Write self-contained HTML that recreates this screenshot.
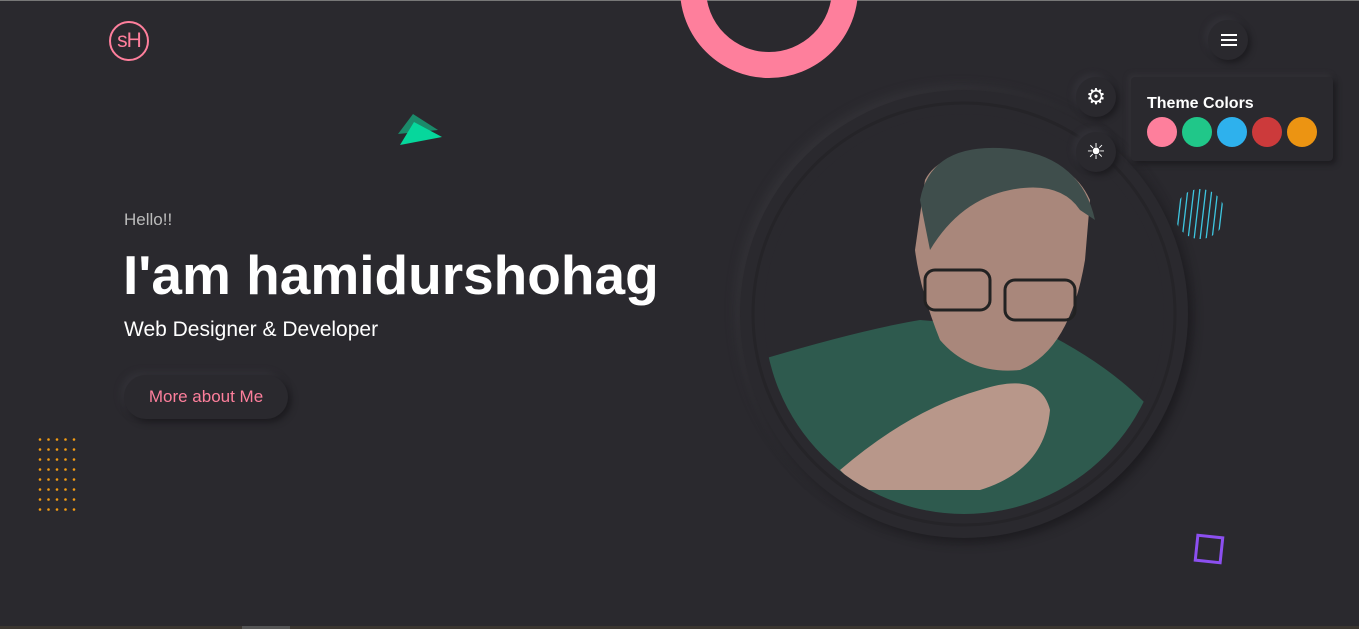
<!DOCTYPE html>
<html><head><style>
*{margin:0;padding:0;box-sizing:border-box}
body{width:1359px;height:629px;background:#2a292e;overflow:hidden;position:relative;font-family:"Liberation Sans",sans-serif;color:#fff}
.a{position:absolute}
.btn{border-radius:50%;background:#2a292e;box-shadow:3px 3px 6px #1d1c20,-3px -3px 6px #333238}
</style></head><body>
<div class="a" style="left:0;top:0;width:1359px;height:1px;background:#777"></div>
<div class="a" style="left:0;top:626px;width:1359px;height:3px;background:#3b3630"></div>
<div class="a" style="left:242px;top:626px;width:48px;height:3px;background:#555"></div>
<div class="a" style="left:109px;top:21px;width:40px;height:40px;border:2px solid #fe7f9c;border-radius:50%;color:#fe7f9c;font-size:21px;text-align:center;line-height:36px;letter-spacing:-1px">sH</div>
<div class="a" style="left:680px;top:-100px;width:178px;height:178px;border:26px solid #fe7f9c;border-radius:50%"></div>
<svg class="a" style="left:398px;top:112px" width="46" height="36"><polygon points="0,22 15,2 40,18" fill="#1b8a6a"/><polygon points="2,33 16,10 44,25" fill="#06d79c"/></svg>
<div class="a" style="left:124px;top:210px;font-size:17px;color:#bbb">Hello!!</div>
<div class="a" style="left:123px;top:243px;font-size:55px;font-weight:bold;letter-spacing:0px">I'am hamidurshohag</div>
<div class="a" style="left:124px;top:318px;font-size:21px">Web Designer &amp; Developer</div>
<div class="a" style="left:124px;top:375px;width:164px;height:44px;border-radius:22px;background:#2a292e;box-shadow:3px 3px 7px #1b1a1e,-3px -3px 7px #343339;color:#fe7f9c;font-size:17px;text-align:center;line-height:44px">More about Me</div>
<svg class="a" style="left:38px;top:437px" width="40" height="75"><defs><pattern id="d" width="8.5" height="10" patternUnits="userSpaceOnUse"><circle cx="2" cy="2.5" r="1.3" fill="#f39c12"/></pattern></defs><rect width="40" height="75" fill="url(#d)"/></svg>
<div class="a" style="left:740px;top:90px;width:448px;height:448px;border-radius:50%;box-shadow:4px 4px 10px #1c1b1f,-4px -4px 10px #36353a"></div>
<svg class="a" style="left:740px;top:90px" width="450" height="450">
<defs><clipPath id="c"><circle cx="224" cy="224" r="200"/></clipPath></defs>
<circle cx="224" cy="224" r="211" fill="none" stroke="#252428" stroke-width="3"/>
<g clip-path="url(#c)">
<rect x="0" y="0" width="450" height="450" fill="#2a292e"/>
<path d="M20 270 Q120 240 180 230 L300 240 Q380 280 420 330 L420 450 L0 450 Z" fill="#2e5a4e"/>
<path d="M100 380 Q170 320 240 300 Q300 280 310 320 Q305 380 240 400 L120 400 Z" fill="#b8978a"/>
</g>
<path d="M185 90 Q200 60 260 62 Q330 65 350 110 L345 170 Q330 260 280 280 Q230 285 200 250 Q180 200 175 160 Z" fill="#a9877b"/>
<path d="M180 110 Q190 55 260 58 Q340 62 355 130 L340 120 Q320 90 270 100 Q220 110 190 160 Z" fill="#3f4e4c"/>
<rect x="185" y="180" width="65" height="40" rx="10" fill="none" stroke="#222" stroke-width="3"/><rect x="265" y="190" width="70" height="40" rx="10" fill="none" stroke="#222" stroke-width="3"/>
</svg>
<div class="a btn" style="left:1208px;top:20px;width:40px;height:40px"></div>
<div class="a" style="left:1221px;top:34px;width:16px;height:2px;background:#fff;box-shadow:0 5px 0 #fff,0 10px 0 #fff"></div>
<div class="a btn" style="left:1076px;top:77px;width:40px;height:40px;color:#fff;font-size:22px;text-align:center;line-height:40px">⚙</div>
<div class="a btn" style="left:1076px;top:132px;width:40px;height:40px;color:#fff;font-size:22px;text-align:center;line-height:40px">☀</div>
<div class="a" style="left:1131px;top:77px;width:202px;height:84px;border-radius:4px;background:#2a292e;box-shadow:3px 3px 6px #1c1b1f,-2px -2px 6px #36353a"></div>
<div class="a" style="left:1147px;top:95px;font-size:16px;font-weight:bold">Theme Colors</div>
<div class="a" style="left:1147px;top:117px;width:30px;height:30px;border-radius:50%;background:#fe7f9c"></div>
<div class="a" style="left:1182px;top:117px;width:30px;height:30px;border-radius:50%;background:#20c789"></div>
<div class="a" style="left:1217px;top:117px;width:30px;height:30px;border-radius:50%;background:#2eb1ed"></div>
<div class="a" style="left:1252px;top:117px;width:30px;height:30px;border-radius:50%;background:#cc3a3b"></div>
<div class="a" style="left:1287px;top:117px;width:30px;height:30px;border-radius:50%;background:#ec9412"></div>
<svg class="a" style="left:1174px;top:188px" width="52" height="52"><defs><clipPath id="h"><circle cx="26" cy="26" r="25"/></clipPath></defs><g clip-path="url(#h)" stroke="#3ec6e0" stroke-width="1.3"><path d="M2 52L8 0M8 52L14 0M14 52L20 0M20 52L26 0M26 52L32 0M32 52L38 0M38 52L44 0M44 52L50 0"/></g></svg>
<div class="a" style="left:1195px;top:535px;width:28px;height:28px;border:3px solid #8c4ff0;transform:rotate(6deg)"></div>
</body></html>
